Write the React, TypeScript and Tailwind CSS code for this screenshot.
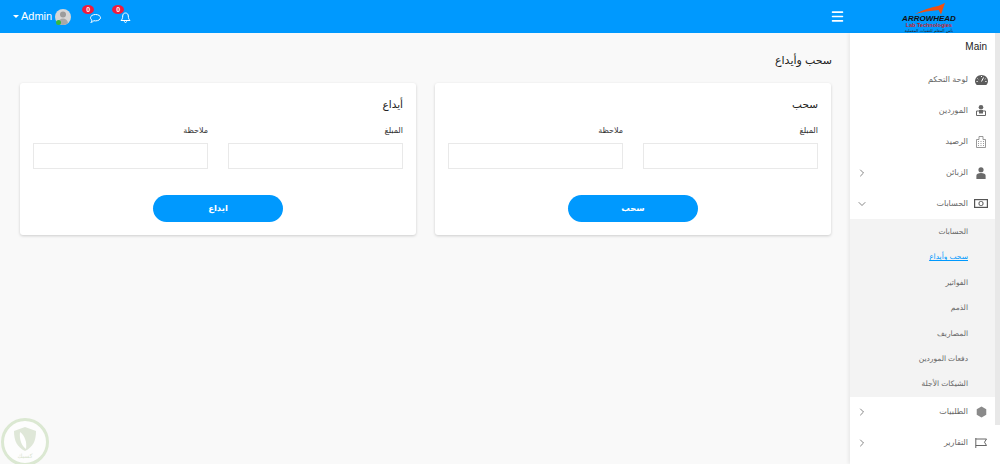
import React from 'react';
import { ChevronDown, ChevronRight, Menu } from 'lucide-react';

const font = "font-['Liberation_Sans','DejaVu_Sans',sans-serif]";

function Badge({ top }: { top: string }) {
  return (
    <span className={`absolute -left-[8px] ${top} w-[12px] h-[9px] rounded-[50%] bg-[#ee1c3d] text-white text-[7px] leading-[9px] text-center font-bold`}>
      0
    </span>
  );
}

function Logo() {
  return (
    <div className="w-[56px] h-[33px] flex flex-col items-center overflow-hidden">
      <svg viewBox="0 0 56 12" className="w-[56px] h-[12px] mt-[3px] shrink-0">
        <path d="M14 11 Q26 5 37 3 L44 0 L40 11.500 L37.500 7 Q25 8 14 11 Z" fill="#f2500f" />
      </svg>
      <span className="text-[8px] leading-[7px] font-bold italic text-[#111] whitespace-nowrap font-['Liberation_Sans',sans-serif]">ARROWHEAD</span>
      <span className="text-[5.500px] leading-[5px] mt-[1px] font-bold text-[#c8222a] whitespace-nowrap font-['Liberation_Sans',sans-serif]">Lab Technologies</span>
      <span dir="rtl" className="text-[4px] leading-[4px] mt-[1px] text-[#222] whitespace-nowrap font-['DejaVu_Sans',sans-serif]">بأس المعلم للتقنيات المعملية</span>
    </div>
  );
}

function Header() {
  return (
    <header className="h-[33px] shrink-0 bg-[#0099fe] flex items-center justify-between text-white">
      <div className="flex items-center pl-[13px]">
        <span className="w-0 h-0 border-x-[3px] border-x-transparent border-t-[3px] border-t-white mr-[2px]" />
        <span className="text-[11px] leading-none">Admin</span>
        <div className="relative ml-[3px] w-[16px] h-[16px]">
          <svg viewBox="0 0 16 16" className="w-[16px] h-[16px]">
            <circle cx="8" cy="8" r="8" fill="#d6d6d6" />
            <circle cx="8" cy="5.500" r="3" fill="#9c9c9c" />
            <path d="M3 14c.5-3 2.500-4.500 5-4.500s4.500 1.500 5 4.500c-1.500 1.300-3 2-5 2s-3.500-.7-5-2z" fill="#a8a8a8" />
          </svg>
          <span className="absolute left-[1px] bottom-0 w-[5px] h-[5px] rounded-full bg-[#37b83f]" />
        </div>
        <div className="relative ml-[19px] mt-[4px] w-[11px] h-[9px]">
          <Badge top="-top-[9px]" />
          <svg viewBox="0 0 11 9" className="w-[11px] h-[9px]" fill="none" stroke="white" strokeWidth="1">
            <path d="M5.500.5c2.800 0 5 1.400 5 3.200S8.300 6.900 5.500 6.900c-.6 0-1.100-.1-1.600-.2C3 7.600 2 8.300.8 8.400c.7-.6 1.100-1.400 1.200-2.300C1.100 5.500.5 4.700.5 3.700.5 1.900 2.700.5 5.500.5z" />
          </svg>
        </div>
        <div className="relative ml-[19px] mt-[2px] w-[11px] h-[11px]">
          <Badge top="-top-[7px]" />
          <svg viewBox="0 0 11 11" className="w-[11px] h-[11px]" fill="none" stroke="white" strokeWidth="1">
            <path d="M5.500 1C3.800 1 2.700 2.300 2.700 4c0 2.500-.7 3.400-1.700 4.500h9C9 7.400 8.300 6.500 8.300 4 8.300 2.300 7.200 1 5.500 1z" />
            <path d="M4.300 9.300c.2.800.7 1.200 1.200 1.200s1-.4 1.200-1.200" />
          </svg>
        </div>
      </div>
      <div className="flex items-center">
        <Menu className="w-[15px] h-[15px] text-white" strokeWidth={2.5} />
        <div className="ml-[56px] mr-[43px]">
          <Logo />
        </div>
      </div>
    </header>
  );
}

function Field({ label }: { label: string }) {
  return (
    <div className="w-[175px]">
      <div className="text-[8px] leading-[10px] text-[#333] mb-[7px]">{label}</div>
      <div className="h-[26px] bg-white border border-[#e9e9e9]" />
    </div>
  );
}

function Card({ title, action }: { title: string; action: string }) {
  return (
    <section className="w-[396px] h-[152px] bg-white rounded-[3px] shadow-[0_1px_3px_rgba(0,0,0,0.18)] px-[13px] pt-[14px]">
      <h2 className="text-[10.500px] leading-[14px] font-normal text-[#222] mb-[15px]">{title}</h2>
      <div className="flex justify-between">
        <Field label="المبلغ" />
        <Field label="ملاحظة" />
      </div>
      <div className="flex justify-center mt-[26px]">
        <button className="w-[130px] h-[27px] rounded-full bg-[#0099fe] text-white text-[8.500px] font-bold">{action}</button>
      </div>
    </section>
  );
}

function GaugeIcon() {
  return (
    <svg viewBox="0 0 13 10" className="w-[13px] h-[10px]">
      <path d="M1.800 10C.7 9 0 7.700 0 6.300 0 2.800 2.900 0 6.500 0S13 2.800 13 6.300c0 1.400-.7 2.700-1.800 3.700z" fill="#5c5c5c" />
      <path d="M6.500 6.500L8.500 2.500M6 1.500h1M2.500 3.500l.7.700M10.500 3.800l-.7.500M1.500 6.500h1.200M10.300 6.500h1.200" stroke="#fff" strokeWidth="1" fill="none" />
    </svg>
  );
}

function SuppliersIcon() {
  return (
    <svg viewBox="0 0 10 11" className="w-[10px] h-[11px]">
      <circle cx="5" cy="2.300" r="2.300" fill="#666" />
      <path d="M.5 10.500V6h9v4.500z" fill="none" stroke="#666" strokeWidth="1" />
      <path d="M3 5h4v3.500H3z" fill="#666" />
    </svg>
  );
}

function BuildingIcon() {
  return (
    <svg viewBox="0 0 10 12" className="w-[10px] h-[12px]" fill="none" stroke="#808080" strokeWidth=".8">
      <path d="M.5 11.500V3.500h2.500V.5h4v3h2.500v8z" />
      <path d="M2 5.500h1M4.500 5.500h1M7 5.500h1M2 7.500h1M4.500 7.500h1M7 7.500h1M2 9.500h1M4.500 9.500h1M7 9.500h1" />
    </svg>
  );
}

function PersonIcon() {
  return (
    <svg viewBox="0 0 10 13" className="w-[10px] h-[12px]" fill="#6a6a6a">
      <circle cx="5" cy="3" r="2.800" />
      <path d="M0 13V9.500C0 7.500 2 6.500 5 6.500s5 1 5 3V13z" />
    </svg>
  );
}

function MoneyIcon() {
  return (
    <svg viewBox="0 0 14 9" className="w-[14px] h-[9px]" fill="none" stroke="#555" strokeWidth="1.200">
      <rect x=".6" y=".6" width="12.800" height="7.800" />
      <rect x="5" y="2.500" width="4" height="4" rx="1.500" fill="#fff" stroke="#555" strokeWidth="1" />
    </svg>
  );
}

function HexIcon() {
  return (
    <svg viewBox="0 0 12 13" className="w-[11px] h-[12px]">
      <path d="M6 .5l5.200 3v6L6 12.500l-5.200-3v-6z" fill="#8a8a8a" />
    </svg>
  );
}

function FlagIcon() {
  return (
    <svg viewBox="0 0 12 10" className="w-[12px] h-[10px]" fill="none" stroke="#555" strokeWidth=".9">
      <path d="M.8 0v10" />
      <path d="M.8 1h10.700L9.500 4.200l2 3.300H.8" />
    </svg>
  );
}

function NavRow({ label, icon, arrow }: { label: string; icon: React.ReactNode; arrow?: 'right' | 'down' }) {
  return (
    <div className="flex items-center h-[31px]">
      <div className="w-[24px] pl-[6px]">
        {arrow === 'right' && <ChevronRight className="w-[12px] h-[12px] text-[#444]" strokeWidth={1.3} />}
        {arrow === 'down' && <ChevronDown className="w-[12px] h-[12px] text-[#444]" strokeWidth={1.3} />}
      </div>
      <div dir="rtl" className="flex-1 text-[8px] text-[#666] text-right pr-[3px]">{label}</div>
      <div className="w-[20px] mr-[4px] flex justify-center">{icon}</div>
    </div>
  );
}

function SubItem({ label, active }: { label: string; active?: boolean }) {
  return (
    <div dir="rtl" className="h-[25.400px] flex items-center pr-[27px] text-[7.500px]">
      <span className={active ? 'text-[#0099fe] underline' : 'text-[#666]'}>{label}</span>
    </div>
  );
}

function Sidebar() {
  const sub = ['الحسابات', 'سحب وأيداع', 'الفواتير', 'الذمم', 'المصاريف', 'دفعات الموردين', 'الشيكات الأجلة'];
  return (
    <aside className="relative w-[150px] shrink-0 bg-white shadow-[-2px_0_3px_rgba(0,0,0,0.06)] overflow-hidden pr-[5px]">
      <div className="absolute right-0 top-0 w-[5px] h-[392px] bg-[#e8e8e8]" />
      <div className="text-[10px] leading-[12px] text-[#222] text-right pt-[8px] pr-[8px] pb-[11px]">Main</div>
      <NavRow label="لوحة التحكم" icon={<GaugeIcon />} />
      <NavRow label="الموردين" icon={<SuppliersIcon />} />
      <NavRow label="الرصيد" icon={<BuildingIcon />} />
      <NavRow label="الزبائن" icon={<PersonIcon />} arrow="right" />
      <NavRow label="الحسابات" icon={<MoneyIcon />} arrow="down" />
      <div className="bg-[#f3f3f3]">
        {sub.map((s) => (
          <SubItem key={s} label={s} active={s === 'سحب وأيداع'} />
        ))}
      </div>
      <NavRow label="الطلبيات" icon={<HexIcon />} arrow="right" />
      <NavRow label="التقارير" icon={<FlagIcon />} arrow="right" />
    </aside>
  );
}

function Watermark() {
  return (
    <div className="absolute left-[1px] bottom-[-2px] w-[48px] h-[48px] rounded-full border-[3px] border-[#dbe8d2] bg-white/60 flex flex-col items-center justify-center">
      <svg viewBox="0 0 24 26" className="w-[24px] h-[26px]">
        <path d="M12 1L23 5c0 10-3 16-11 20C4 21 1 15 1 5z" fill="#dfe7d8" />
        <path d="M7 6c5 4 7 10 6 17-4-3-7-9-6-17z" fill="#fff" />
      </svg>
      <span dir="rtl" className="text-[6px] leading-[7px] text-[#d8e3cf] font-['DejaVu_Sans',sans-serif]">كسبك</span>
    </div>
  );
}

export default function App() {
  return (
    <div className={`relative h-screen flex flex-col overflow-hidden bg-[#f9f9f9] ${font}`}>
      <Header />
      <div className="flex flex-1 min-h-0">
        <main dir="rtl" className="flex-1 pt-[20px] pr-[19px] pl-[20px]">
          <h1 className="text-[11px] leading-[15px] font-normal text-[#222] mb-[15px] -mr-[1px]">سحب وأيداع</h1>
          <div className="flex gap-[19px]">
            <Card title="سحب" action="سحب" />
            <Card title="أيداع" action="ايداع" />
          </div>
        </main>
        <Sidebar />
      </div>
      <Watermark />
    </div>
  );
}
